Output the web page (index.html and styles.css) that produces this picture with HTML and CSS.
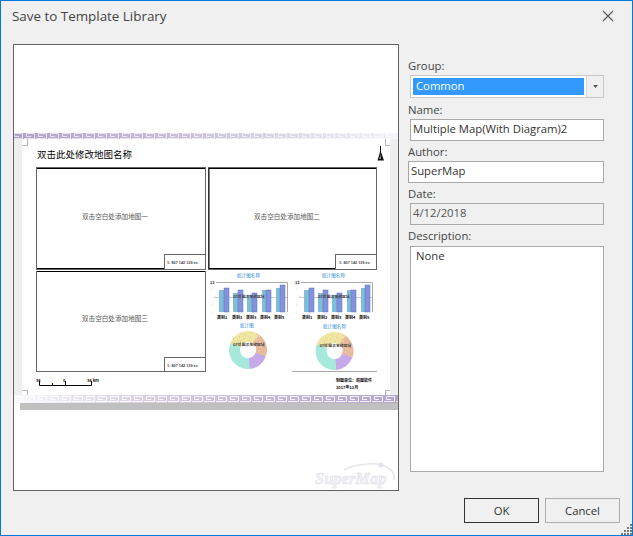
FILE: index.html
```html
<!DOCTYPE html>
<html lang="en">
<head>
  <meta charset="UTF-8" />
  <title>Save to Template Library</title>
  <link rel="stylesheet" href="styles.css">
</head>
<body>
  <div class="dialog">
    <div class="titlebar">
      <span class="title">Save to Template Library</span>
      <svg class="close" width="12" height="12" viewBox="0 0 12 12"><path d="M1 1L11 11M11 1L1 11" /></svg>
    </div>

    <div class="content">
      <div class="preview">
        <svg class="sheet" width="384" height="445" viewBox="14 45 384 445">
          <defs>
            <linearGradient id="bandTop"><stop offset="0" stop-color="#b0a3c9" /><stop offset="0.55" stop-color="#cfc9de" /><stop offset="1" stop-color="#f4f3f7" /></linearGradient>
            <linearGradient id="bandBottom"><stop offset="0" stop-color="#f8f7fa" /><stop offset="0.35" stop-color="#d6cfe2" /><stop offset="1" stop-color="#b3a4cb" /></linearGradient>
            <pattern id="keyTop" width="12" height="6" patternUnits="userSpaceOnUse" y="133">
              <path d="M0 5.500H10.500V.5H2.500V3.500H7" fill="none" stroke="#fff" stroke-opacity=".65" />
            </pattern>
            <pattern id="keyBottom" width="12" height="6" patternUnits="userSpaceOnUse" y="396">
              <path d="M0 5.500H10.500V.5H2.500V3.500H7" fill="none" stroke="#fff" stroke-opacity=".85" />
            </pattern>
            <pattern id="speckOrange" width="4" height="4" patternUnits="userSpaceOnUse">
              <rect width="4" height="4" fill="#e8b999" /><rect x="1" y="1" width="1" height="1" fill="#f3e2a8" /><rect x="3" y="3" width="1" height="1" fill="#cdb4d8" />
            </pattern>
            <pattern id="speckYellow" width="5" height="4" patternUnits="userSpaceOnUse">
              <rect width="5" height="4" fill="#efe6a2" /><rect x="2" y="1" width="1" height="1" fill="#e8bb9c" />
            </pattern>

            <g id="chart">
              <path class="axis" d="M216 282.500H287.500V312" />
              <path class="grid" d="M214 297.500H287" />
              <g class="bar-a">
                <rect x="219" y="290" width="5" height="22" /><rect x="233" y="293" width="5" height="19" /><rect x="247" y="295" width="5" height="17" /><rect x="262" y="290" width="4" height="22" /><rect x="276" y="288" width="4" height="24" />
              </g>
              <g class="bar-b">
                <rect x="224" y="288" width="5" height="24" /><rect x="238" y="290" width="5" height="22" /><rect x="252" y="293" width="5" height="19" /><rect x="266" y="290" width="5" height="22" /><rect x="280" y="285" width="5" height="27" />
              </g>
              <text class="t-tiny t-dark" x="210" y="284">12</text>
              <path class="ticks" d="M211 289h1M214 297h2M211 305h1M211 312h1" />
              <text class="t-over" x="233" y="298">Grid 图表名称区域</text>
              <text class="t-tiny t-black" x="217" y="319">类别1</text>
              <text class="t-tiny t-black" x="232" y="319">类别2</text>
              <text class="t-tiny t-black" x="246" y="319">类别3</text>
              <text class="t-tiny t-black" x="260" y="319">类别4</text>
              <text class="t-tiny t-black" x="274" y="319">类别5</text>
            </g>

            <g id="donut">
              <g fill="none" stroke-width="11">
                <circle r="13.500" pathLength="360" stroke="url(#speckYellow)" stroke-dasharray="106 360" transform="rotate(-160)" />
                <circle r="13.500" pathLength="360" stroke="url(#speckOrange)" stroke-dasharray="76 360" transform="rotate(-55)" />
                <circle r="13.500" pathLength="360" stroke="#c5a9e8" stroke-dasharray="66 360" transform="rotate(20)" />
                <circle r="13.500" pathLength="360" stroke="#a6e9da" stroke-dasharray="116 360" transform="rotate(85)" />
              </g>
              <text class="t-over" x="-15" y="-4">Grid 图表名称区域</text>
            </g>
          </defs>

          <rect x="20" y="402" width="378" height="8" fill="#c0c0c0" />
          <rect x="14" y="138" width="8" height="258" fill="#eeeeee" />
          <rect x="390" y="138" width="8" height="258" fill="#eeeeee" />
          <rect x="14" y="133" width="384" height="6" fill="url(#bandTop)" />
          <rect x="14" y="133" width="384" height="6" fill="url(#keyTop)" />
          <rect x="14" y="395" width="384" height="8" fill="url(#bandBottom)" />
          <rect x="14" y="396" width="384" height="6" fill="url(#keyBottom)" />

          <path class="crop" d="M22 145.500H27.500V139M385.500 139V145.500H390M22 390.500H27.500V395M385.500 395V390.500H390" />

          <text class="t-title" x="37" y="158">双击此处修改地图名称</text>
          <path d="M380 146V152L377.500 160.500H384L381 152V146Z" fill="#111" />
          <path d="M379.500 159L380.500 154V159Z" fill="#fff" />

          <rect class="frame" x="36.500" y="167.500" width="169" height="102" />
          <path class="ink" d="M37 168.500H205M37 268.500H164" />
          <rect class="frame" x="164.500" y="254.500" width="41" height="15" />
          <text class="t-map" x="82" y="219">双击空白处添加地图一</text>
          <text class="t-scale" x="167" y="264">1: 807 142 139 ec</text>

          <rect class="frame" x="208.500" y="167.500" width="168" height="102" />
          <path class="ink" d="M209 168.500H376M209 168V268.500H335" />
          <rect class="frame" x="335.500" y="254.500" width="41" height="15" />
          <text class="t-map" x="254" y="219">双击空白处添加地图二</text>
          <text class="t-scale" x="339" y="264">1: 807 142 139 ec</text>

          <rect class="frame" x="36.500" y="271.500" width="169" height="100" />
          <path class="ink" d="M37 271.500H205" />
          <rect class="frame" x="164.500" y="357.500" width="41" height="14" />
          <text class="t-map" x="82" y="321">双击空白处添加地图三</text>
          <text class="t-scale" x="167" y="367">1: 807 142 139 ec</text>

          <text class="t-label" x="237" y="277">统计图名称</text>
          <text class="t-label" x="322" y="277">统计图名称</text>
          <use href="#chart" />
          <use href="#chart" x="85" />
          <text class="t-label" x="240" y="327">统计图</text>
          <text class="t-label" x="323" y="328">统计图名称</text>
          <use href="#donut" x="248" y="350" />
          <use href="#donut" x="334.500" y="351" />
          <path class="axis" d="M292 371.500H377" />

          <text class="t-tiny t-black" x="36" y="382">38</text>
          <text class="t-tiny t-black" x="63" y="382">0</text>
          <text class="t-tiny t-black" x="87" y="382">38 km</text>
          <path class="scale" d="M39.500 381V385.500H91.500V381M52.500 383V385M65.500 381V385" />
          <text class="t-tiny t-black" x="336" y="382">制图单位：超图软件</text>
          <text class="t-tiny t-black" x="336" y="389">2017年12月</text>

          <path class="mark-arc" d="M344 470C352 465 372 462 381 465C390 467 396 474 394 480" />
          <circle cx="381" cy="465" r="2.500" fill="#e4e2ec" />
          <text class="t-mark" x="315" y="484">SuperMap</text>
        </svg>
      </div>

      <div class="side">
        <div class="field">
          <label class="label">Group:</label>
          <div class="combo">
            <span class="combo-value">Common</span>
            <span class="combo-btn"><svg width="5" height="3" viewBox="0 0 5 3"><path d="M0 0H5L2.500 3Z" /></svg></span>
          </div>
        </div>
        <div class="field">
          <label class="label">Name:</label>
          <div class="input indent">Multiple Map(With Diagram)2</div>
        </div>
        <div class="field">
          <label class="label">Author:</label>
          <div class="input">SuperMap</div>
        </div>
        <div class="field">
          <label class="label">Date:</label>
          <div class="input indent readonly">4/12/2018</div>
        </div>
        <div class="field field-desc">
          <label class="label">Description:</label>
          <div class="input indent textarea">None</div>
        </div>
      </div>
    </div>

    <div class="footer">
      <button class="btn btn-default" type="button">OK</button>
      <button class="btn" type="button">Cancel</button>
    </div>

    <svg class="grip" width="11" height="11" viewBox="0 0 11 11">
      <path d="M9 0h2v2H9zM6 3h2v2H6zM9 3h2v2H9zM3 6h2v2H3zM6 6h2v2H6zM9 6h2v2H9zM0 9h2v2H0zM3 9h2v2H3zM6 9h2v2H6zM9 9h2v2H9z" />
    </svg>
  </div>
</body>
</html>
```

FILE: styles.css
```css
* { box-sizing: border-box; }
body { margin: 0; font-family: "Open Sans", sans-serif; font-size: 11.3px; color: #333; background: #f0f0f0; }

.dialog { position: relative; width: 633px; height: 536px; border: 1px solid #0078d7; background: #f0f0f0; overflow: hidden; }

.titlebar { display: flex; align-items: center; justify-content: space-between; height: 30px; padding: 0 12px 0 11px; }
.title { font-size: 13.4px; color: #444; }
.close { fill: none; stroke: #555; stroke-width: 1.1; margin-right: 6px; }

.content { display: flex; gap: 9px; padding: 13px 0 0 12px; }

.preview { width: 386px; height: 447px; border: 1px solid #646464; background: #fff; }
.sheet { display: block; }

.axis { fill: none; stroke: #a8a8a8; }
.grid { fill: none; stroke: #c4c4e6; }
.bar-a { fill: #80bdd8; }
.bar-b { fill: #8492dc; stroke: #5d72b8; stroke-width: .5; }
.ticks { fill: none; stroke: #e8d9a0; }
.crop { fill: none; stroke: #b4b4b4; }
.frame { fill: none; stroke: #666; }
.ink { fill: none; stroke: #000; }
.scale { fill: none; stroke: #000; }
.mark-arc { fill: none; stroke: #e6e4ee; stroke-width: 1.5; }

.sheet text { font-family: "Noto Sans CJK SC", "Liberation Sans", sans-serif; }
.sheet .t-title { font-size: 9.500px; fill: #000; }
.sheet .t-map { font-size: 6.600px; fill: #555; }
.sheet .t-scale { font-size: 3.800px; fill: #444; font-family: "Liberation Sans", sans-serif; font-weight: bold; }
.sheet .t-label { font-size: 4.600px; fill: #2a8ce0; }
.sheet .t-over { font-size: 3.800px; fill: #444; font-weight: bold; }
.sheet .t-tiny { font-size: 4px; font-weight: bold; }
.t-dark { fill: #333; }
.t-black { fill: #111; }
.sheet .t-mark { font-family: "Liberation Serif", serif; font-size: 16.500px; font-style: italic; font-weight: bold; fill: #f3f2f7; stroke: #dedce8; stroke-width: .5; }

.side { display: flex; flex-direction: column; gap: 3px; width: 196px; padding-top: 14px; }
.field { display: flex; flex-direction: column; gap: 1px; }
.field-desc { gap: 2px; }
.label { height: 16px; line-height: 16px; color: #444; }

.combo { display: flex; height: 23px; margin: 0 0 1px 2px; padding: 2px; border: 1px solid #c8c8c8; background: #fff; }
.combo-value { width: 171px; height: 17px; line-height: 15px; padding-left: 3px; background: #3399ff; color: #fff; }
.combo-btn { display: flex; align-items: center; justify-content: center; width: 17px; margin: -2px -2px -2px auto; background: #f0f0f0; border-left: 1px solid #dcdcdc; fill: #555; }

.input { height: 22px; line-height: 18px; padding-left: 2px; border: 1px solid #a9a9a9; background: #fff; }
.indent { margin-left: 2px; }
.readonly { background: #f0f0f0; color: #555; }
.textarea { height: 226px; padding: 0 0 0 5px; }

.footer { display: flex; justify-content: flex-end; gap: 6px; margin-top: 7px; padding-right: 12px; }
.btn { width: 75px; height: 25px; padding: 0; font: inherit; color: #333; background: #f0f0f0; border: 1px solid #adadad; }
.btn-default { border-color: #333; }

.grip { position: absolute; right: 0; bottom: 0; fill: #777; }
```
